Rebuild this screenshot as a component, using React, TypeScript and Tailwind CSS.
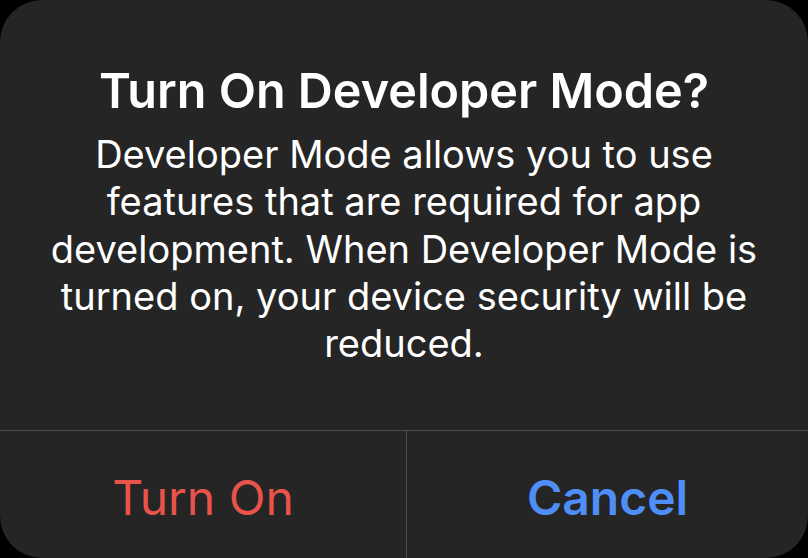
export default function App() {
  return (
    <div className="w-[808px] h-[558px] bg-black" style={{ fontFamily: 'Inter, "Noto Sans", sans-serif' }}>
      <div className="w-full h-full bg-[#252525] rounded-[42px] flex flex-col overflow-hidden">
        {/* Message */}
        <div className="flex-1 flex flex-col items-center pt-[63px] text-white text-center">
          <h1 className="text-[48.5px] leading-[56px] font-semibold whitespace-nowrap">Turn On Developer Mode?</h1>
          <p className="mt-[12px] text-[38px] leading-[47.3px] whitespace-nowrap">
            Developer Mode allows you to use<br />
            features that are required for app<br />
            development. When Developer Mode is<br />
            turned on, your device security will be<br />
            reduced.
          </p>
        </div>

        {/* Actions */}
        <div className="h-[128px] flex border-t border-[#4d4d4d]">
          <button className="w-[406px] flex items-center justify-center pt-[6px] text-[#e8534a] text-[48px] leading-none font-normal">
            Turn On
          </button>
          <div className="w-px bg-[#4d4d4d]" />
          <button className="flex-1 flex items-center justify-center pt-[6px] text-[#4f8ef7] text-[48px] leading-none font-semibold">
            Cancel
          </button>
        </div>
      </div>
    </div>
  );
}
